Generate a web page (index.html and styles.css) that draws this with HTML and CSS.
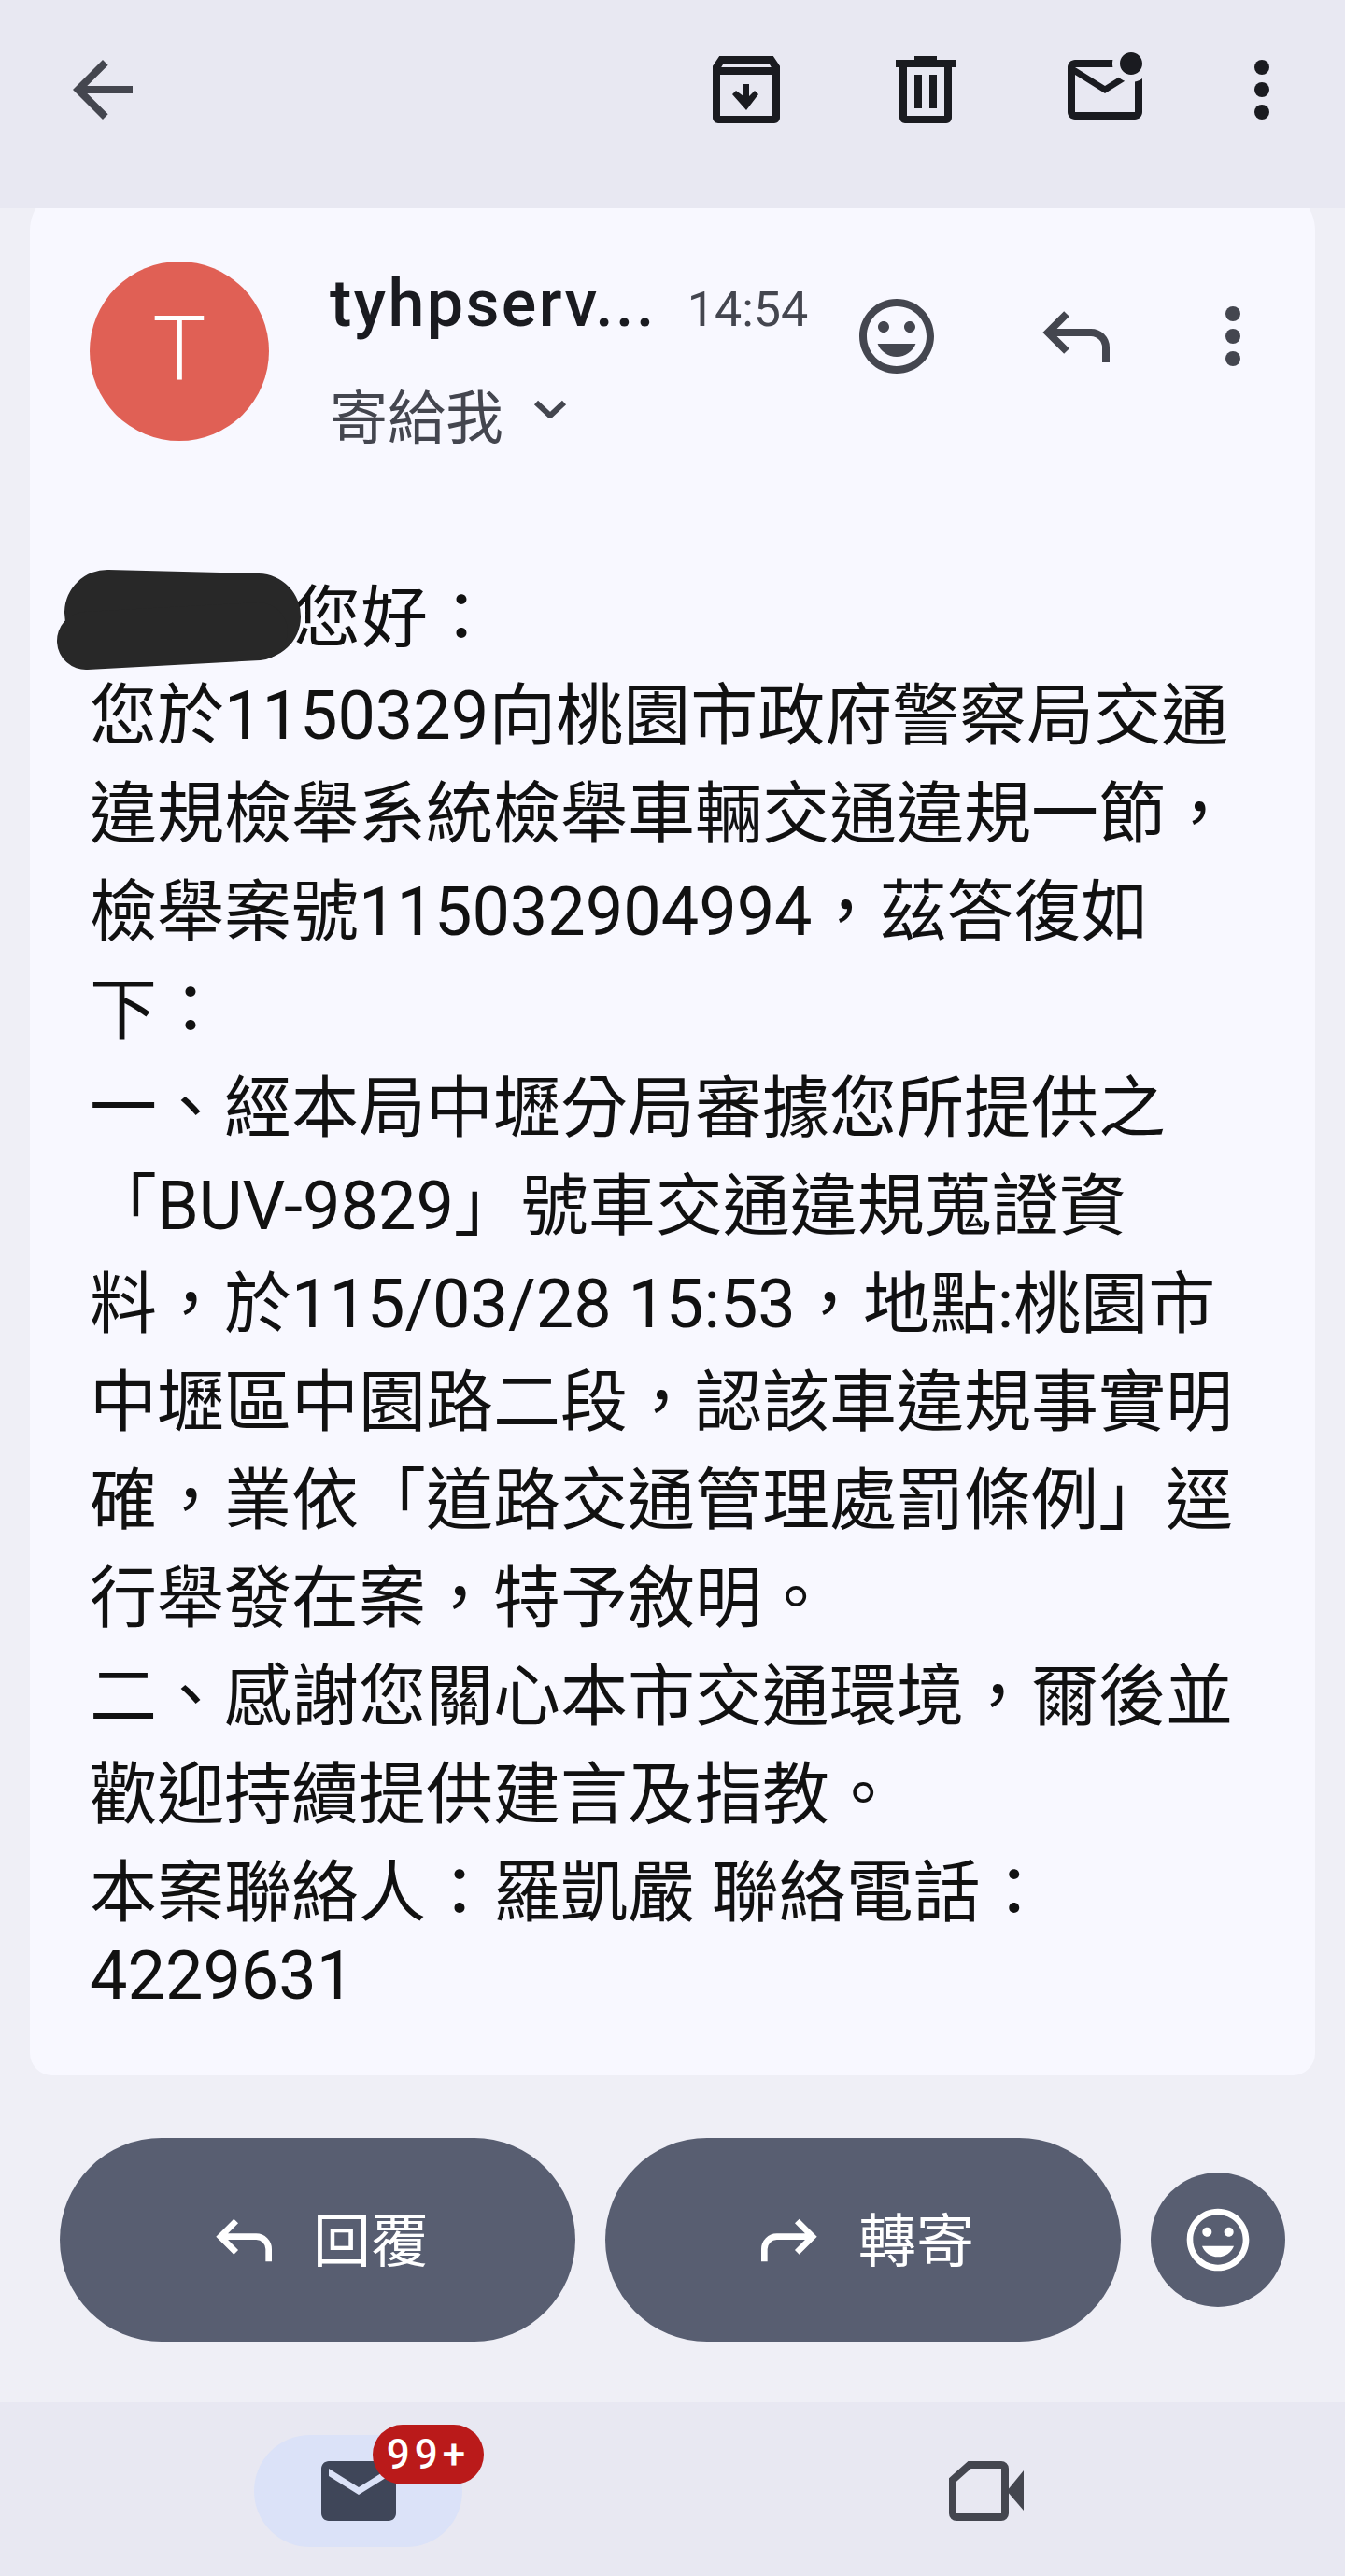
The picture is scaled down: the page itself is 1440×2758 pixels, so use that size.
FILE: index.html
```html
<!DOCTYPE html>
<html lang="zh-TW">
<head>
    <meta charset="UTF-8">
    <title>Mail</title>
    <link rel="stylesheet" href="styles.css">
</head>
<body>
    <div class="top-bar">
        <svg class="icon back-icon" viewBox="0 0 24 24"><path d="M20 11H7.830l5.590-5.590L12 4l-8 8 8 8 1.410-1.410L7.830 13H20v-2z"/></svg>
        <div class="top-actions">
            <svg class="icon" viewBox="0 0 24 24"><path d="M19.200 3H4.800L3 5.700V19.500C3 20.300 3.700 21 4.500 21h15c.8 0 1.500-.7 1.500-1.500V5.700L19.200 3zM5.900 5h12.200l.6 1H5.300l.6-1zM5 19V8h14v11H5z"/><path d="M11.250 10.500h1.500v3.250l1.500-1.500 1 1L12 17.500l-3.750-4.250 1-1 2 1.500z"/></svg>
            <svg class="icon" viewBox="0 0 24 24"><path d="M9 3h6v1h5v2h-1v13.500c0 .8-.7 1.500-1.500 1.500h-11C5.700 21 5 20.300 5 19.500V6H4V4h5V3zM7 6v13h10V6H7z"/><path d="M9 8h2v9H9zM13 8h2v9h-2z"/></svg>
            <svg class="icon" viewBox="0 0 24 24"><path d="M22 8.980V18c0 1.100-.9 2-2 2H4c-1.100 0-2-.9-2-2V6c0-1.100.9-2 2-2h10.100c-.06.320-.1.660-.1 1s.04.680.1 1H4l8 5 3.670-2.290c.470.430 1.020.760 1.630.980L12 13 4 8v10h16V9.900c.740-.15 1.420-.48 2-.92zM16 5c0 1.660 1.340 3 3 3s3-1.340 3-3-1.340-3-3-3-3 1.340-3 3z"/></svg>
            <svg class="icon more-icon" viewBox="0 0 24 24"><circle cx="12" cy="6" r="2"/><circle cx="12" cy="12" r="2"/><circle cx="12" cy="18" r="2"/></svg>
        </div>
    </div>

    <div class="mail-card">
        <div class="mail-header">
            <div class="avatar">T</div>
            <div class="sender">
                <div class="sender-row">
                    <span class="sender-name">tyhpserv...</span>
                    <span class="sender-time">14:54</span>
                </div>
                <div class="recipient-row">
                    <span>寄給我</span>
                    <svg class="chevron" viewBox="0 0 36 20"><path d="M3 3l15 14L33 3"/></svg>
                </div>
            </div>
            <div class="header-actions">
                <svg class="icon muted" viewBox="0 0 24 24"><path d="M11.990 2C6.470 2 2 6.480 2 12s4.470 10 9.990 10C17.520 22 22 17.520 22 12S17.520 2 11.990 2zM12 20c-4.420 0-8-3.580-8-8s3.580-8 8-8 8 3.580 8 8-3.580 8-8 8zm3.500-9c.830 0 1.500-.67 1.500-1.500S16.330 8 15.500 8 14 8.670 14 9.500s.67 1.500 1.500 1.500zm-7 0c.830 0 1.500-.67 1.500-1.500S9.330 8 8.500 8 7 8.670 7 9.500 7.670 11 8.500 11zm3.500 6.500c2.330 0 4.310-1.460 5.110-3.500H6.890c.8 2.040 2.780 3.500 5.110 3.500z"/></svg>
                <svg class="icon line-icon muted-line" viewBox="0 0 24 24"><path d="M9.500 6l-5 5 5 5M4.500 11H16a4 4 0 0 1 4 4v4"/></svg>
                <svg class="icon muted" viewBox="0 0 24 24"><circle cx="12" cy="6" r="2"/><circle cx="12" cy="12" r="2"/><circle cx="12" cy="18" r="2"/></svg>
            </div>
        </div>

        <div class="mail-body">
            <div class="line greeting">
                <svg class="redaction" viewBox="0 0 262 107"><path class="redaction-top" d="M53 46L214 50"/><path class="redaction-bottom" d="M30 76L215 66"/></svg>
                <span class="name-gap"></span>您好：
            </div>
            <div class="line">您於1150329向桃園市政府警察局交通</div>
            <div class="line">違規檢舉系統檢舉車輛交通違規一節，</div>
            <div class="line">檢舉案號115032904994，茲答復如</div>
            <div class="line">下：</div>
            <div class="line">一、經本局中壢分局審據您所提供之</div>
            <div class="line">「BUV-9829」號車交通違規蒐證資</div>
            <div class="line">料，於115/03/28 15:53，地點:桃園市</div>
            <div class="line">中壢區中園路二段，認該車違規事實明</div>
            <div class="line">確，業依「道路交通管理處罰條例」逕</div>
            <div class="line">行舉發在案，特予敘明。</div>
            <div class="line">二、感謝您關心本市交通環境，爾後並</div>
            <div class="line">歡迎持續提供建言及指教。</div>
            <div class="line">本案聯絡人：羅凱嚴 聯絡電話：</div>
            <div class="line last-line">4229631</div>
        </div>
    </div>

    <div class="reply-actions">
        <div class="action-button">
            <svg class="small-icon" viewBox="0 0 24 24"><path d="M9.500 6l-5 5 5 5M4.500 11H16a4 4 0 0 1 4 4v4"/></svg>
            <span class="action-label">回覆</span>
        </div>
        <div class="action-button">
            <svg class="small-icon" viewBox="0 0 24 24"><path d="M14.500 6l5 5-5 5M19.500 11H8a4 4 0 0 0-4 4v4"/></svg>
            <span class="action-label">轉寄</span>
        </div>
        <div class="emoji-button">
            <svg viewBox="0 0 24 24"><path d="M11.990 2C6.470 2 2 6.480 2 12s4.470 10 9.990 10C17.520 22 22 17.520 22 12S17.520 2 11.990 2zM12 20c-4.420 0-8-3.580-8-8s3.580-8 8-8 8 3.580 8 8-3.580 8-8 8zm3.500-9c.830 0 1.500-.67 1.500-1.500S16.330 8 15.500 8 14 8.670 14 9.500s.67 1.500 1.500 1.500zm-7 0c.830 0 1.500-.67 1.500-1.500S9.330 8 8.500 8 7 8.670 7 9.500 7.670 11 8.500 11zm3.500 6.500c2.330 0 4.310-1.460 5.110-3.500H6.890c.8 2.040 2.780 3.500 5.110 3.500z"/></svg>
        </div>
    </div>

    <div class="bottom-nav">
        <div class="nav-pill">
            <svg class="nav-mail" viewBox="0 0 24 24"><path d="M20 4H4c-1.100 0-2 .9-2 2v12c0 1.100.9 2 2 2h16c1.100 0 2-.9 2-2V6c0-1.100-.9-2-2-2zm0 4l-8 5-8-5V6l8 5 8-5v2z"/></svg>
            <span class="badge">99+</span>
        </div>
        <svg class="nav-video" viewBox="0 0 24 24"><path class="video-body" d="M7.500 5H16a1 1 0 0 1 1 1v12a1 1 0 0 1-1 1H4a1 1 0 0 1-1-1V9z"/><path d="M17.500 12L22 6.500v10.750z"/></svg>
    </div>
</body>
</html>
```

FILE: styles.css
```css
* {
    box-sizing: border-box;
}

body {
    margin: 0;
    width: 1440px;
    height: 2758px;
    overflow: hidden;
    background: #efeff6;
    font-family: Roboto, "Noto Sans CJK TC", sans-serif;
    color: #1a1b20;
}

svg {
    display: block;
    flex: none;
}

.icon {
    width: 96px;
    height: 96px;
    fill: #1a1b20;
}

.top-bar {
    position: relative;
    z-index: 1;
    display: flex;
    height: 223px;
    padding: 48px 41px 0 62px;
    background: #e8e8f2;
}

.back-icon {
    fill: #44464f;
}

.top-actions {
    display: flex;
    gap: 96px;
    margin-left: auto;
}

.more-icon {
    margin-left: -24px;
}

.mail-card {
    height: 2023px;
    margin: -24px 32px 0;
    padding: 81px 40px 0 64px;
    background: #f8f8ff;
    border-radius: 48px 48px 24px 24px;
}

.mail-header {
    display: flex;
    height: 192px;
}

.avatar {
    display: flex;
    align-items: center;
    justify-content: center;
    width: 192px;
    height: 192px;
    padding-bottom: 4px;
    border-radius: 50%;
    background: #e06055;
    color: #fff;
    font-size: 96px;
    font-weight: 300;
}

.sender {
    width: 624px;
    padding-left: 65px;
}

.sender-row {
    display: flex;
    align-items: baseline;
    gap: 33px;
    height: 76px;
    line-height: 90px;
}

.sender-name {
    font-size: 70px;
    font-weight: 500;
    letter-spacing: 2.4px;
}

.sender-time {
    font-size: 52px;
    color: #44464f;
}

.recipient-row {
    display: flex;
    align-items: center;
    gap: 32px;
    margin-top: 51px;
    font-size: 62px;
    line-height: 84px;
    color: #44464f;
}

.chevron {
    width: 36px;
    height: 20px;
    margin-top: -22px;
    fill: none;
    stroke: #44464f;
    stroke-width: 6px;
}

.header-actions {
    display: flex;
    gap: 96px;
    margin-top: 32px;
}

.header-actions .icon + .icon + .icon {
    margin-left: -24px;
}

.muted {
    fill: #44464f;
}

.muted-line {
    fill: none;
    stroke: #44464f;
    stroke-width: 2px;
}

.mail-body {
    margin-top: 137px;
    font-size: 72px;
    color: #111;
}

.line {
    height: 105px;
    line-height: 105px;
    white-space: nowrap;
}

.greeting {
    position: relative;
}

.name-gap {
    display: inline-block;
    width: 218px;
}

.redaction {
    position: absolute;
    left: -34px;
    top: 1px;
    width: 262px;
    height: 107px;
    overflow: visible;
}

.redaction-top {
    fill: none;
    stroke: #282828;
    stroke-width: 92px;
    stroke-linecap: round;
}

.redaction-bottom {
    fill: none;
    stroke: #282828;
    stroke-width: 62px;
    stroke-linecap: round;
}

.last-line {
    height: 90px;
    line-height: 74px;
}

.reply-actions {
    display: flex;
    align-items: flex-start;
    gap: 32px;
    height: 350px;
    padding: 67px 64px 0;
}

.action-button {
    display: flex;
    align-items: center;
    justify-content: center;
    gap: 34px;
    width: 552px;
    height: 218px;
    border-radius: 109px;
    background: #585e71;
    color: #fff;
    font-size: 62px;
}

.action-label {
    margin-top: -6px;
}

.small-icon {
    width: 80px;
    height: 80px;
    fill: none;
    stroke: #fff;
    stroke-width: 2px;
}

.emoji-button {
    display: flex;
    align-items: center;
    justify-content: center;
    width: 144px;
    height: 144px;
    margin-top: 37px;
    border-radius: 50%;
    background: #585e71;
}

.emoji-button svg {
    width: 80px;
    height: 80px;
    fill: #fff;
}

.bottom-nav {
    display: flex;
    align-items: center;
    height: 186px;
    padding: 4px 0 0 272px;
    background: #e8e8f2;
}

.nav-pill {
    position: relative;
    display: flex;
    align-items: center;
    justify-content: center;
    width: 223px;
    height: 120px;
    border-radius: 60px;
    background: #dbe2f8;
}

.nav-mail {
    width: 96px;
    height: 96px;
    fill: #3f4659;
}

.badge {
    position: absolute;
    left: 127px;
    top: -11px;
    width: 119px;
    height: 64px;
    border-radius: 32px;
    background: #ba1a1a;
    color: #fff;
    font-size: 44px;
    font-weight: 500;
    line-height: 64px;
    letter-spacing: 5px;
    text-align: center;
}

.nav-video {
    width: 96px;
    height: 96px;
    margin-left: 513px;
    fill: #44464f;
}

.video-body {
    fill: none;
    stroke: #44464f;
    stroke-width: 2px;
}
```
